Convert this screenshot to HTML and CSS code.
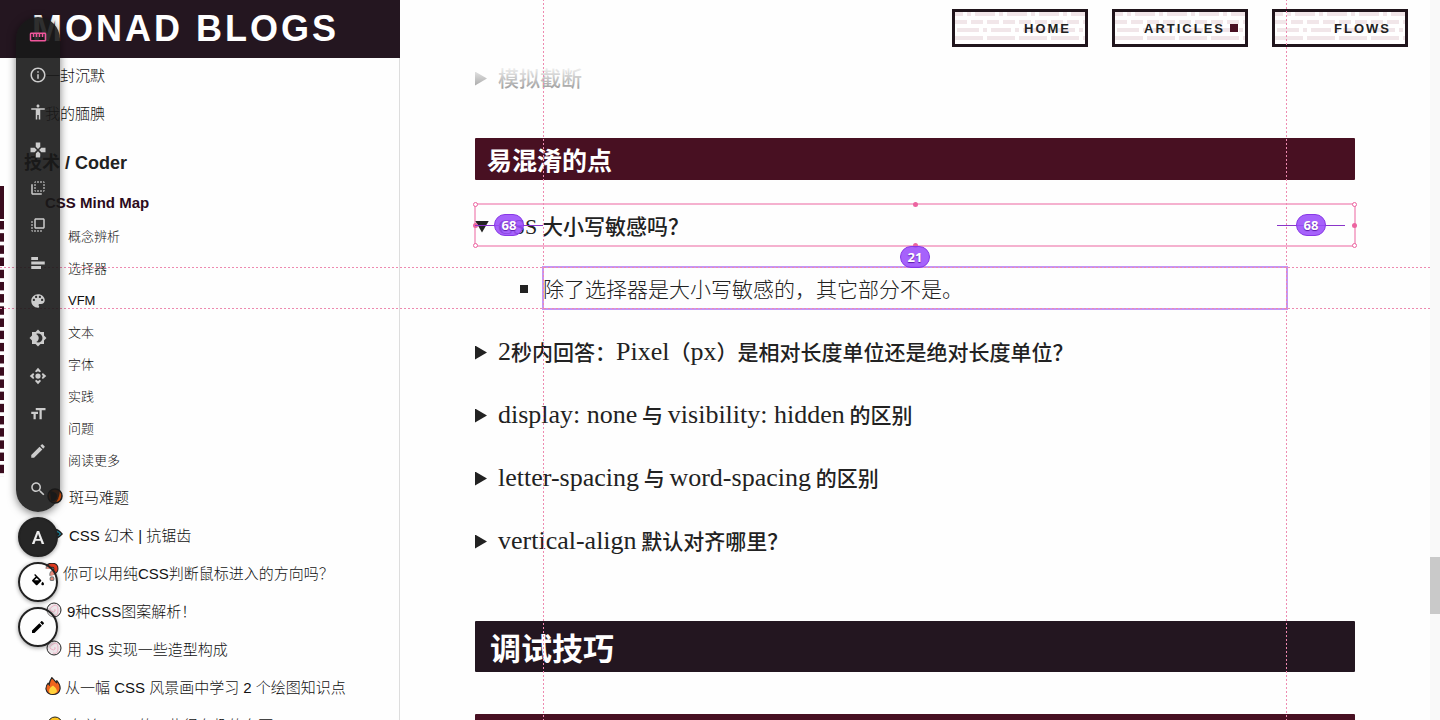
FILE: index.html
```html
<!DOCTYPE html>
<html lang="zh-CN">
<head>
    <meta charset="UTF-8">
    <meta name="viewport" content="width=device-width, initial-scale=1.0">
    <title>Monad Blogs - CSS Mind Map</title>
    <link rel="stylesheet" href="styles.css">
</head>
<body>
    <aside class="sidebar">
        <a class="brand" href="#">MONAD BLOGS</a>
        <nav class="toc">
            <a class="post" href="#">一封沉默</a>
            <a class="post" href="#">我的腼腆</a>
            <h2 class="toc-title">技术 / Coder</h2>
            <a class="post current" href="#">CSS Mind Map</a>
            <div class="sub-list">
                <a href="#">概念辨析</a>
                <a href="#">选择器</a>
                <a href="#">VFM</a>
                <a href="#">文本</a>
                <a href="#">字体</a>
                <a href="#">实践</a>
                <a href="#">问题</a>
                <a href="#">阅读更多</a>
            </div>
            <a class="post" href="#">
                <svg class="emoji wide" viewBox="0 0 16 16"><circle cx="8" cy="8" r="7" fill="#e8590c" stroke="#222" stroke-width="1.5"/><path d="M3 3q8 1 7 6t-6 4" fill="#222"/></svg>
                斑马难题</a>
            <a class="post" href="#">
                <svg class="emoji wide" viewBox="0 0 16 16"><path d="M2 8q6-9 13 0q-7 8-13 0z" fill="#1c9fbf" stroke="#222" stroke-width="1.5"/><circle cx="11" cy="8" r="1.5" fill="#222"/></svg>
                CSS 幻术 | 抗锯齿</a>
            <a class="post" href="#">
                <svg class="emoji narrow" viewBox="0 0 12 16"><path d="M2.500 5q0-3 3.500-3t3.500 3q0 2-2 3t-1.500 3" fill="none" stroke="#222" stroke-width="4.500"/><path d="M2.500 5q0-3 3.500-3t3.500 3q0 2-2 3t-1.500 3" fill="none" stroke="#e03c20" stroke-width="2.800"/><circle cx="6" cy="14" r="1.700" fill="#e03c20" stroke="#222"/></svg>
                你可以用纯CSS判断鼠标进入的方向吗？</a>
            <a class="post" href="#">
                <svg class="emoji" viewBox="0 0 16 16"><circle cx="8" cy="8" r="7" fill="#ece6e9" stroke="#222"/><path d="M8 8q2-1 1 1t-4 0t2-5t5 4t-5 5" fill="none" stroke="#efb3c6"/></svg>
                9种CSS图案解析！</a>
            <a class="post" href="#">
                <svg class="emoji" viewBox="0 0 16 16"><circle cx="8" cy="8" r="7" fill="#ece6e9" stroke="#222"/><path d="M8 8q2-1 1 1t-4 0t2-5t5 4t-5 5" fill="none" stroke="#efb3c6"/></svg>
                用 JS 实现一些造型构成</a>
            <a class="post" href="#">
                <svg class="emoji flame" viewBox="0 0 14 16"><path d="M6 .5q2 2 4 4.500q.5-1 .2-2q3.500 4 3.100 7.500q-1 5-6.300 5t-6.300-5q0-3 2-5q.5 1 1 1.500q-.2-3 2.300-6.500z" fill="#f0641e" stroke="#222" stroke-width="1"/><path d="M7 7.500q3.500 3 3.500 5t-3.500 2.500t-3.500-2.500t3.500-5z" fill="#ffd23c"/></svg>
                从一幅 CSS 风景画中学习 2 个绘图知识点</a>
            <a class="post" href="#">
                <svg class="emoji wide" viewBox="0 0 16 16"><circle cx="8" cy="8" r="7" fill="#fcc21b" stroke="#222"/><circle cx="5.500" cy="7" r="1"/><circle cx="10.500" cy="7" r="1"/></svg>
                有关 CSS 的一些很有趣的东西</a>
        </nav>
    </aside>

    <main class="content">
        <header class="site-header">
            <nav class="menu">
                <a href="#">HOME</a>
                <a class="active" href="#">ARTICLES</a>
                <a href="#">FLOWS</a>
            </nav>
        </header>

        <article class="article">
            <details>
                <summary>模拟截断</summary>
            </details>

            <h3>易混淆的点</h3>
            <details open>
                <summary class="anchor">
                    <span><span class="latin caps">CSS</span> 大小写敏感吗？</span>
                    <span class="handle ring top left"></span>
                    <span class="handle ring top right"></span>
                    <span class="handle ring bottom left"></span>
                    <span class="handle ring bottom right"></span>
                    <span class="handle top center"></span>
                    <span class="handle bottom center"></span>
                    <span class="handle middle left"></span>
                    <span class="handle middle right"></span>
                    <span class="distance from-left"><b>68</b></span>
                    <span class="distance from-right"><b>68</b></span>
                    <span class="distance below"><b>21</b></span>
                </summary>
                <ul>
                    <li class="measured">
                        除了选择器是大小写敏感的，其它部分不是。
                        <span class="guide-x start"></span>
                        <span class="guide-x end"></span>
                        <span class="guide-y start"></span>
                        <span class="guide-y end"></span>
                    </li>
                </ul>
            </details>
            <details>
                <summary><span><span class="latin">2</span>秒内回答：<span class="latin">Pixel</span>（<span class="latin">px</span>）是相对长度单位还是绝对长度单位？</span></summary>
            </details>
            <details>
                <summary><span><span class="latin">display: none</span> 与 <span class="latin">visibility: hidden</span> 的区别</span></summary>
            </details>
            <details>
                <summary><span><span class="latin">letter-spacing</span> 与 <span class="latin">word-spacing</span> 的区别</span></summary>
            </details>
            <details>
                <summary><span><span class="latin">vertical-align</span> 默认对齐哪里？</span></summary>
            </details>

            <h2>调试技巧</h2>
            <h3>&nbsp;</h3>
        </article>
    </main>

    <div class="scrollbar"><div class="thumb"></div></div>

    <!-- VisBug tools -->
    <div class="tools">
        <div class="tool-bar">
            <button class="selected" aria-label="Guides"><svg viewBox="0 0 24 24"><path d="M21 6H3c-1.100 0-2 .9-2 2v8c0 1.100.9 2 2 2h18c1.100 0 2-.9 2-2V8c0-1.100-.9-2-2-2zm0 10H3V8h2v4h2V8h2v4h2V8h2v4h2V8h2v4h2V8h2v8z"/></svg></button>
            <button aria-label="Inspect"><svg viewBox="0 0 24 24"><path d="M11 17h2v-6h-2v6zm1-15C6.480 2 2 6.480 2 12s4.480 10 10 10 10-4.480 10-10S17.520 2 12 2zm0 18c-4.410 0-8-3.590-8-8s3.590-8 8-8 8 3.590 8 8-3.590 8-8 8zM11 9h2V7h-2v2z"/></svg></button>
            <button aria-label="Accessibility"><svg viewBox="0 0 24 24"><path d="M12 2c1.100 0 2 .9 2 2s-.9 2-2 2-2-.9-2-2 .9-2 2-2zm9 7h-6v13h-2v-6h-2v6H9V9H3V7h18v2z"/></svg></button>
            <button aria-label="Move"><svg viewBox="0 0 24 24"><path d="M15 7.500V2H9v5.500l3 3 3-3zM7.500 9H2v6h5.500l3-3-3-3zM9 16.500V22h6v-5.500l-3-3-3 3zM16.500 9l-3 3 3 3H22V9h-5.500z"/></svg></button>
            <button aria-label="Margin"><svg viewBox="0 0 24 24"><path d="M9 7H7v2h2V7zm0 4H7v2h2v-2zm0-8c-1.110 0-2 .9-2 2h2V3zm4 12h-2v2h2v-2zm6-12v2h2c0-1.100-.9-2-2-2zm-6 0h-2v2h2V3zM9 17v-2H7c0 1.100.89 2 2 2zm10-4h2v-2h-2v2zm0-4h2V7h-2v2zm0 8c1.100 0 2-.9 2-2h-2v2zM5 7H3v12c0 1.100.89 2 2 2h12v-2H5V7zm10-2h2V3h-2v2zm0 12h2v-2h-2v2z"/></svg></button>
            <button aria-label="Padding"><svg viewBox="0 0 24 24"><path d="M3 13h2v-2H3v2zm0 4h2v-2H3v2zm2 4v-2H3c0 1.100.89 2 2 2zM3 9h2V7H3v2zm12 12h2v-2h-2v2zm4-18H9c-1.110 0-2 .9-2 2v10c0 1.100.89 2 2 2h10c1.100 0 2-.9 2-2V5c0-1.100-.9-2-2-2zm0 12H9V5h10v10zm-8 6h2v-2h-2v2zm-4 0h2v-2H7v2z"/></svg></button>
            <button aria-label="Align"><svg viewBox="0 0 24 24"><path d="M3 4h9v4H3zM3 10h18v4H3zM3 16h13v4H3z"/></svg></button>
            <button aria-label="Hue shift"><svg viewBox="0 0 24 24"><path d="M12 3c-4.970 0-9 4.030-9 9s4.030 9 9 9c.83 0 1.500-.67 1.500-1.500 0-.39-.15-.74-.39-1.010-.23-.26-.38-.61-.38-.99 0-.83.67-1.500 1.500-1.500H16c2.760 0 5-2.240 5-5 0-4.420-4.030-8-9-8zm-5.500 9c-.83 0-1.500-.67-1.500-1.500S5.670 9 6.500 9 8 9.670 8 10.500 7.330 12 6.500 12zm3-4C8.670 8 8 7.330 8 6.500S8.670 5 9.500 5s1.500.67 1.500 1.500S10.330 8 9.500 8zm5 0c-.83 0-1.500-.67-1.500-1.500S13.670 5 14.500 5s1.500.67 1.500 1.500S15.330 8 14.500 8zm3 4c-.83 0-1.500-.67-1.500-1.500S16.670 9 17.500 9s1.500.67 1.500 1.500-.67 1.500-1.500 1.500z"/></svg></button>
            <button aria-label="Shadow"><svg viewBox="0 0 24 24"><path d="M20 8.690V4h-4.690L12 .69 8.690 4H4v4.690L.69 12 4 15.310V20h4.690L12 23.310 15.310 20H20v-4.690L23.310 12 20 8.690zM12 18c-.89 0-1.740-.2-2.500-.55C11.560 16.500 13 14.420 13 12s-1.440-4.500-3.500-5.450C10.260 6.200 11.110 6 12 6c3.310 0 6 2.690 6 6s-2.690 6-6 6z"/></svg></button>
            <button aria-label="Position"><svg viewBox="0 0 24 24"><path d="M12 1l4 4.500-1.500 1.500L12 5.500 9.500 7 8 5.500zM12 23l4-4.500-1.500-1.500L12 18.500 9.500 17 8 18.500zM1 12l4.500-4L7 9.500 5.500 12 7 14.500 5.500 16zM23 12l-4.500-4L17 9.500l1.500 2.500-1.500 2.500 1.500 1.500z"/><circle cx="12" cy="12" r="3.500"/></svg></button>
            <button aria-label="Font"><svg viewBox="0 0 24 24"><path d="M9 4v3h5v12h3V7h5V4H9zm-6 8h3v7h3v-7h3V9H3v3z"/></svg></button>
            <button aria-label="Edit text"><svg viewBox="0 0 24 24"><path d="M3 17.250V21h3.750L17.810 9.940l-3.750-3.750L3 17.250zM20.710 7.040c.39-.39.39-1.020 0-1.410l-2.340-2.340c-.39-.39-1.020-.39-1.410 0l-1.830 1.830 3.750 3.750 1.830-1.830z"/></svg></button>
            <button aria-label="Search"><svg viewBox="0 0 24 24"><path d="M15.500 14h-.79l-.28-.27C15.410 12.590 16 11.110 16 9.500 16 5.910 13.090 3 9.500 3S3 5.910 3 9.500 5.910 16 9.500 16c1.610 0 3.090-.59 4.230-1.570l.27.28v.79l5 4.990L20.490 19l-4.990-5zm-6 0C7.010 14 5 11.990 5 9.500S7.010 5 9.500 5 14 7.010 14 9.500 11.990 14 9.500 14z"/></svg></button>
        </div>
        <button class="color-button dark" aria-label="Text color">A</button>
        <button class="color-button" aria-label="Fill color"><svg viewBox="0 0 24 24"><path d="M16.560 8.940L7.620 0 6.210 1.410l2.380 2.380-5.150 5.150c-.59.59-.59 1.540 0 2.120l5.500 5.500c.29.29.68.44 1.060.44s.77-.15 1.060-.44l5.500-5.500c.59-.58.59-1.530 0-2.120zM19 11.500s-2 2.170-2 3.500c0 1.100.9 2 2 2s2-.9 2-2c0-1.330-2-3.500-2-3.500z"/><path d="M6.500 9.500L10 6l3.500 3.500z" fill="#fff"/></svg></button>
        <button class="color-button" aria-label="Border color"><svg viewBox="0 0 24 24"><path d="M3 17.250V21h3.750L17.810 9.940l-3.750-3.750L3 17.250zM20.710 7.040c.39-.39.39-1.020 0-1.410l-2.340-2.340c-.39-.39-1.020-.39-1.410 0l-1.830 1.830 3.750 3.750 1.830-1.830z"/></svg></button>
    </div>
</body>
</html>
```
FILE: styles.css
```css
* {
    box-sizing: border-box;
}
body {
    margin: 0;
    height: 100vh;
    overflow: hidden;
    display: grid;
    grid-template-columns: 400px 1fr 10px;
    background: #fefefe;
    color: #222;
    font-family: "Liberation Sans", "Noto Sans CJK SC", sans-serif;
}
a {
    color: inherit;
    text-decoration: none;
}

/* sidebar */
.sidebar {
    height: 100vh;
    overflow: hidden;
}
.brand {
    position: relative;
    display: block;
    height: 58px;
    padding-left: 32px;
    background: #241620;
    color: #fff;
    font-size: 36px;
    font-weight: bold;
    letter-spacing: 3px;
    line-height: 58px;
}
.toc {
    padding-top: 1px;
    margin-top: -4px;
    border-right: 1px solid #ddd;
}
.post {
    display: flex;
    align-items: center;
    gap: 4px;
    height: 38px;
    padding-left: 45px;
    color: #111;
    font-size: 15px;
    font-weight: 300;
    white-space: nowrap;
}
.toc-title {
    margin: 13px 0 1px;
    padding-left: 24px;
    font-size: 18px;
    line-height: 38px;
}
.current {
    position: relative;
    color: #2c0c1c;
    font-weight: bold;
}
.current::before {
    content: "";
    position: absolute;
    left: 0;
    top: 3px;
    bottom: 2px;
    width: 4px;
    background: #3a0c1e;
}
.sub-list {
    background: linear-gradient(#3a0c1e 8px, transparent 8px) 0 0 / 4px 12px;
    background-repeat: no-repeat round;
    color: #111;
}
.sub-list a {
    display: block;
    padding-left: 68px;
    font-size: 13px;
    font-weight: 300;
    line-height: 32px;
}
.emoji {
    width: 18px;
    height: 16px;
}
.emoji.wide {
    width: 20px;
}
.emoji.flame {
    width: 16px;
    height: 18px;
}
.emoji.narrow {
    width: 14px;
    height: 18px;
}

/* top menu */
.content {
    min-width: 0;
    height: 100vh;
}
.site-header {
    position: relative;
    z-index: 1;
    height: 116px;
    padding: 9px 22px;
    background: linear-gradient(#fefefe 64px, rgba(254, 254, 254, .1));
}
.menu {
    display: flex;
    justify-content: flex-end;
    gap: 24px;
}
.menu a {
    display: flex;
    align-items: center;
    justify-content: flex-end;
    gap: 5px;
    width: 136px;
    height: 38px;
    padding-right: 14px;
    border: 3px solid #20151c;
    background:
        repeating-linear-gradient(90deg, #f1e6e9 0 20px, transparent 20px 24px, #f1e6e9 24px 28px, transparent 28px 32px) -12px 0 / 100% 4px,
        repeating-linear-gradient(90deg, #f1e6e9 0 12px, transparent 12px 16px, #f1e6e9 16px 28px, transparent 28px 32px) 0 8px / 100% 4px,
        repeating-linear-gradient(90deg, #f1e6e9 0 20px, transparent 20px 24px, #f1e6e9 24px 28px, transparent 28px 32px) 4px 16px / 100% 4px,
        repeating-linear-gradient(90deg, #f1e6e9 0 28px, transparent 28px 32px) 0 24px / 100% 4px;
    background-repeat: repeat-x;
    background-color: #fff;
    font-size: 13px;
    font-weight: bold;
    letter-spacing: 2px;
}
.menu .active {
    padding-right: 7px;
}
.menu .active::after {
    content: "";
    width: 8px;
    height: 8px;
    background: #481022;
}

/* article */
.article {
    margin-top: -60px;
    padding: 0 75px;
    font-family: "Noto Sans CJK SC", sans-serif;
    font-size: 21px;
    line-height: 42px;
}
.article h2,
.article h3 {
    border-radius: 1px;
    color: #fff;
}
.article h2 {
    margin: 60px 0 42px;
    padding-left: 15px;
    background: #231620;
    font-size: 31px;
    line-height: 51px;
}
.article h3 {
    margin: 40px 0 24px;
    padding-left: 12px;
    background: #481022;
    font-size: 25px;
    line-height: 42px;
}
.article details + details {
    margin-top: 21px;
}
.article summary {
    display: flex;
    align-items: center;
    gap: 11px;
    height: 42px;
    font-weight: 500;
    white-space: nowrap;
}
.article summary::before {
    content: "";
    width: 12px;
    height: 14px;
    margin-top: 3px;
    background: #222;
    clip-path: polygon(0 0, 100% 50%, 0 100%);
}
.article details[open] summary::before {
    width: 14px;
    height: 12px;
    margin-right: -2px;
    clip-path: polygon(0 0, 100% 0, 50% 100%);
}
.article ul {
    margin: 21px 0 0;
    padding: 0 68px;
    list-style: none;
}
.article li {
    position: relative;
    font-weight: 300;
}
.article li::before {
    content: "";
    position: absolute;
    left: -23px;
    top: 18px;
    width: 8px;
    height: 8px;
    background: #222;
}
.latin {
    font-family: "Liberation Serif", serif;
    font-size: 26px;
    font-weight: normal;
    line-height: 1;
}
.latin.caps {
    font-size: 22px;
}

/* distance overlay */
.anchor {
    position: relative;
    outline: 2px solid rgba(236, 100, 160, .5);
    outline-offset: -1px;
}
.handle {
    position: absolute;
    z-index: 3;
    width: 5px;
    height: 5px;
    margin: -2px;
    border-radius: 50%;
    background: #ec64a0;
}
.handle.ring {
    border: 1px solid #ec64a0;
    background: #fff;
}
.top { top: 0; }
.bottom { bottom: 0; }
.middle { top: 50%; }
.left { left: 0; }
.right { right: 0; }
.center { left: 50%; }
.distance {
    position: absolute;
    z-index: 4;
    top: 10px;
    display: flex;
    justify-content: center;
    width: 68px;
    background: linear-gradient(#8a35c9, #8a35c9) center / 100% 1px no-repeat;
}
.from-left { left: 0; }
.from-right { right: 10px; }
.below {
    top: 42px;
    left: calc(50% - 34px);
    background: none;
}
.distance b {
    padding: 0 7px;
    border: 1px solid #8838e6;
    border-radius: 11px;
    background: rgba(154, 76, 250, .88);
    color: #fff;
    font: bold 13px/20px "Noto Sans", sans-serif;
    text-shadow: 0 1px 1px #5a18a8;
}
.measured {
    outline: 2px solid rgba(160, 80, 235, .6);
    outline-offset: -1px;
}
.guide-x,
.guide-y {
    position: absolute;
    z-index: 2;
}
.guide-x {
    top: -50vh;
    width: 1px;
    height: 150vh;
    background: repeating-linear-gradient(#ee8ab0 0 2px, transparent 2px 4px);
}
.guide-y {
    left: -543px;
    width: calc(100vw - 10px);
    height: 1px;
    background: repeating-linear-gradient(90deg, #ee8ab0 0 2px, transparent 2px 4px);
}
.guide-x.start { left: 0; }
.guide-x.end { right: 0; }
.guide-y.start { top: 0; }
.guide-y.end { bottom: 0; }

/* page scrollbar */
.scrollbar {
    padding-top: 557px;
    background: #f9f9f9;
}
.thumb {
    height: 57px;
    background: #c9c9c9;
}

/* floating tools */
.tools {
    position: fixed;
    z-index: 10;
    top: 17px;
    left: 16px;
    display: flex;
    flex-direction: column;
    align-items: center;
    gap: 5px;
}
.tool-bar {
    display: grid;
    grid-auto-rows: 1fr;
    width: 44px;
    height: 495px;
    padding: 1px 0 4px;
    border-radius: 22px;
    background: rgba(24, 24, 24, .9);
    box-shadow: 0 2px 8px rgba(0, 0, 0, .5);
}
.tool-bar button {
    display: flex;
    align-items: center;
    justify-content: center;
    padding: 0;
    border: 0;
    background: none;
}
.tool-bar svg {
    width: 18px;
    height: 18px;
    fill: #ccc;
}
.tool-bar .selected svg {
    fill: #f0569b;
}
.color-button {
    display: flex;
    align-items: center;
    justify-content: center;
    width: 40px;
    height: 40px;
    padding: 0;
    border: 2px solid #222;
    border-radius: 50%;
    background: rgba(255, 255, 255, .4);
    box-shadow: 0 1px 4px rgba(0, 0, 0, .4);
}
.color-button svg {
    width: 16px;
    height: 16px;
}
.color-button.dark {
    background: #262626;
    color: #eee;
    font: 500 19px Roboto, sans-serif;
}
```
